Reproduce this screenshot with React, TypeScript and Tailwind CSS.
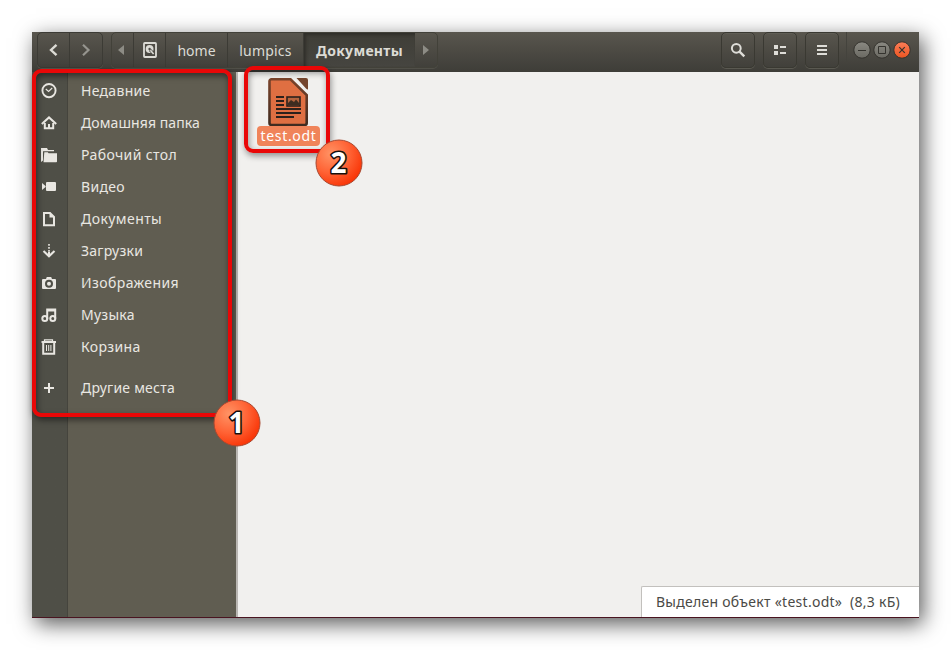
import type { ReactNode } from "react";

const Icon = ({ children }: { children: ReactNode }) => (
  <svg
    width="16"
    height="16"
    viewBox="0 0 16 16"
    fill="none"
    stroke="currentColor"
    className="shrink-0"
  >
    {children}
  </svg>
);

const places = [
  {
    name: "Недавние",
    tracking: "tracking-[0.3px]",
    icon: (
      <>
        <circle cx="8" cy="7.6" r="6.6" strokeWidth="1.9" />
        <path d="M4.8 6 7.6 8.4 11.2 5" strokeWidth="1.2" />
      </>
    ),
  },
  {
    name: "Домашняя папка",
    tracking: "tracking-[0.09px]",
    icon: (
      <>
        <path d="M.8 9 8 2.4 15.2 9" strokeWidth="2" />
        <path d="M3.8 8v5.2h8.4V8" strokeWidth="2" />
        <path d="M7 9h2v5H7z" fill="currentColor" stroke="none" />
      </>
    ),
  },
  {
    name: "Рабочий стол",
    tracking: "tracking-[0.38px]",
    icon: (
      <g fill="currentColor" stroke="none">
        <path d="M0 1h6l1 2h6v1.2H2v9.3L0 15z" />
        <path d="M3.3 5.2h3.5l.8 1H16v8.3a.8.8 0 0 1-.8.8H2.5z" />
      </g>
    ),
  },
  {
    name: "Видео",
    tracking: "tracking-[0.3px]",
    icon: (
      <g fill="currentColor" stroke="none">
        <rect x="5" y="3" width="10" height="9" rx="1" />
        <path d="M1 4l3.6 3v1L1 11z" />
      </g>
    ),
  },
  {
    name: "Документы",
    tracking: "tracking-[0.43px]",
    icon: (
      <>
        <path d="M3 2h6l4 4v8.2H3z" strokeWidth="2" />
        <path d="M8.5 1.5v5H13z" fill="currentColor" stroke="none" />
      </>
    ),
  },
  {
    name: "Загрузки",
    tracking: "tracking-[0.25px]",
    icon: (
      <>
        <path d="M8 1v8" strokeWidth="1.6" strokeDasharray="1.8 1.2" />
        <path d="M2.5 8 8 13.3 13.5 8" strokeWidth="2.1" />
        <path d="M8 9v4" strokeWidth="2" />
      </>
    ),
  },
  {
    name: "Изображения",
    tracking: "tracking-[0.41px]",
    icon: (
      <path
        d="M2 4h3l.8-2h4.4l.8 2h3a1 1 0 0 1 1 1v8a1 1 0 0 1-1 1H2a1 1 0 0 1-1-1V5a1 1 0 0 1 1-1zm6 .8a4 4 0 1 0 0 8 4 4 0 0 0 0-8zm0 2a2 2 0 1 1 0 4 2 2 0 0 1 0-4z"
        fill="currentColor"
        fillRule="evenodd"
        stroke="none"
      />
    ),
  },
  {
    name: "Музыка",
    tracking: "tracking-[0.25px]",
    icon: (
      <>
        <path d="M6.2 12V2.5h8v9M6.2 3.4h8" strokeWidth="2" />
        <circle cx="3.8" cy="11.5" r="2.5" strokeWidth="2" />
        <circle cx="11.8" cy="11.5" r="2.5" strokeWidth="2" />
      </>
    ),
  },
  {
    name: "Корзина",
    tracking: "tracking-[0.35px]",
    icon: (
      <>
        <path d="M.5 3h14.5" strokeWidth="2" />
        <path d="M3.5 2.5V.8h8v1.7" strokeWidth="1.2" />
        <path d="M2.2 4v10.8h11V4" strokeWidth="2" />
        <path d="M5.5 6v6M7.7 6v6M9.9 6v6" strokeWidth="1" />
      </>
    ),
  },
  {
    name: "Другие места",
    tracking: "tracking-[0.22px]",
    icon: <path d="M8 3v10M3 8h10" strokeWidth="2" />,
  },
];

const HeaderButton = ({ children }: { children: ReactNode }) => (
  <div className="flex h-9 w-[34px] items-center justify-center rounded-[5px] border border-[#3a3932] text-[#deddd8] shadow-[0_1px_0_#5a5951,inset_0_1px_0_#5f5d55]">
    {children}
  </div>
);

const Header = () => (
  <div className="flex h-10 shrink-0 bg-linear-to-b from-[#59564e] to-[#3e3d38] pl-[5px] text-[14px] text-[#dcdbd5]">
    <div className="flex h-9 w-[66px] rounded-[5px] border border-[#3c3b35] shadow-[0_1px_0_#55544c]">
      <div className="flex w-[32px] items-center justify-center border-r border-[#3c3b35]">
        <Icon>
          <path d="M10.5 2.8 5 8l5.5 5.2" strokeWidth="2.4" />
        </Icon>
      </div>
      <div className="flex flex-1 items-center justify-center text-[#96958f]">
        <Icon>
          <path d="M5 2.8 10.5 8 5 13.2" strokeWidth="2.2" />
        </Icon>
      </div>
    </div>

    <div className="ml-2 flex h-9 w-[327px] rounded-[5px] border border-[#424139] shadow-[0_1px_0_#504f48]">
      <div className="flex w-[22px] items-center justify-center border-r border-[#3c3b35] pr-1 text-[#8d8c85]">
        <svg width="6" height="10" viewBox="0 0 6 10">
          <path d="M6 0v10L0 5z" fill="currentColor" />
        </svg>
      </div>
      <div className="flex w-8 items-center justify-center border-r border-[#3c3b35]">
        <Icon>
          <rect x="2" y="1" width="12" height="14" rx=".8" strokeWidth="1.8" />
          <circle cx="7.6" cy="7" r="3.9" fill="currentColor" stroke="none" />
          <circle cx="7.6" cy="7" r="1.2" fill="#4c4b45" stroke="none" />
          <path d="M8 8l4 4" stroke="#4c4b45" strokeWidth="3" />
          <path d="M8.4 8.2l3.2 3.8" strokeWidth="1.6" />
        </Icon>
      </div>
      <div className="flex w-[62px] items-center justify-center border-r border-[#3c3b35]">
        home
      </div>
      <div className="flex w-[76px] items-center justify-center border-r border-[#3c3b35] tracking-[0.2px]">
        lumpics
      </div>
      <div className="flex w-[111px] items-center justify-center bg-linear-to-b from-[#3f3e37] to-[#464540] font-bold tracking-[0.3px] shadow-[inset_2px_2px_3px_#302f2a]">
        Документы
      </div>
      <div className="flex flex-1 items-center justify-center text-[#8d8c85]">
        <svg width="6" height="10" viewBox="0 0 6 10">
          <path d="M0 0v10l6-5z" fill="currentColor" />
        </svg>
      </div>
    </div>

    <div className="ml-auto flex gap-2">
      <HeaderButton>
        <Icon>
          <circle cx="6.3" cy="6.3" r="4.4" strokeWidth="2" />
          <path d="M9.3 9.3l5 5" strokeWidth="2.4" />
        </Icon>
      </HeaderButton>
      <HeaderButton>
        <Icon>
          <path
            d="M2 3h4v4H2zM2 9h4v4H2zM8 4h6v2H8zM8 10h6v2H8z"
            fill="currentColor"
            stroke="none"
          />
        </Icon>
      </HeaderButton>
      <HeaderButton>
        <Icon>
          <path d="M3 4h10M3 8h10M3 12h10" strokeWidth="2" />
        </Icon>
      </HeaderButton>
    </div>
    <div className="ml-[7px] flex h-8 border-l border-[#44433d] pt-[9px] pr-2 pl-[6px]">
      <svg width="58" height="18" viewBox="0 0 58 18" fill="none">
        <defs>
          <linearGradient id="grey" x2="0" y2="1">
            <stop stopColor="#8a8982" />
            <stop offset="1" stopColor="#6a6962" />
          </linearGradient>
          <linearGradient id="close" x2="0" y2="1">
            <stop stopColor="#fa7d58" />
            <stop offset="1" stopColor="#ec5521" />
          </linearGradient>
        </defs>
        <g stroke="#34332e">
          <circle cx="9" cy="9" r="8.2" fill="url(#grey)" />
          <circle cx="29" cy="9" r="8.2" fill="url(#grey)" />
          <circle cx="49" cy="9" r="8.2" fill="url(#close)" />
          <path d="M5 9.5h8M25.5 5.5h7v7h-7z" />
          <path d="M46.2 6.2l5.6 5.6M51.8 6.2l-5.6 5.6" strokeWidth="1.2" />
        </g>
      </svg>
    </div>
  </div>
);

const Sidebar = () => (
  <div className="flex w-[206px] shrink-0 border-r-2 border-[#b9b6b2] bg-linear-to-r from-[#4f4f47] from-[35px] to-[#605d51] to-[35px]">
    <div className="w-9 shrink-0 border-r border-[#45443d] pt-[3px] text-[#e9e7e2]">
      {places.map((place) => (
        <div
          key={place.name}
          className="flex h-8 items-center pl-[9px] last:mt-[9px]"
        >
          <Icon>{place.icon}</Icon>
        </div>
      ))}
    </div>
    <div className="pt-[2px] pl-[13px] text-[14px] whitespace-nowrap text-[#e9e7e2]">
      {places.map((place) => (
        <div
          key={place.name}
          className={`flex h-8 items-center last:mt-[9px] ${place.tracking}`}
        >
          {place.name}
        </div>
      ))}
    </div>
  </div>
);

const OdtIcon = () => (
  <svg width="42" height="50" viewBox="0 0 42 50" fill="none">
    <defs>
      <linearGradient id="edge" x2="0" y2="1">
        <stop stopColor="#7a432a" />
        <stop offset="1" stopColor="#402b20" />
      </linearGradient>
    </defs>
    <path d="M28.5 1H38a2 2 0 0 1 2 2v9.5a3 3 0 0 1-2-1z" fill="#75452d" />
    <path
      d="M3.5 2.3h19L38.7 18V46a2 2 0 0 1-2 2H3.5a2 2 0 0 1-2-2V4.3a2 2 0 0 1 2-2z"
      fill="#df6f42"
      stroke="url(#edge)"
      strokeWidth="2.6"
    />
    <path
      d="M8 20h8M8 24h8M8 28h8M8 32h25M8 36h25M8 40h18"
      stroke="#2b211c"
      strokeWidth="2"
    />
    <rect
      x="19"
      y="20"
      width="13"
      height="9"
      fill="#b5643e"
      stroke="#2b211c"
      strokeWidth="1.6"
    />
    <path d="M20 28v-2l3-3 3 2 2-2.5 3.5 4V28z" fill="#3d2c20" />
  </svg>
);

const Badge = ({ value }: { value: number }) => (
  <svg width="48" height="48" viewBox="0 0 48 48">
    <defs>
      <radialGradient id="ball" cx="0.32" cy="0.3" r="0.75">
        <stop stopColor="#ff9365" />
        <stop offset="0.55" stopColor="#ff6335" />
        <stop offset="1" stopColor="#f93507" />
      </radialGradient>
    </defs>
    <circle cx="24" cy="24" r="23" fill="url(#ball)" stroke="#a84830" />
    <text
      x="23.5"
      y="34"
      textAnchor="middle"
      fontSize="28"
      fontWeight="700"
      fill="#fff"
      stroke="#17100d"
      strokeWidth="3.2"
      strokeLinejoin="round"
      paintOrder="stroke"
    >
      {value}
    </text>
  </svg>
);

export default function App() {
  return (
    <div className="relative h-[650px] w-[951px] overflow-hidden bg-white p-8 font-['Noto_Sans',sans-serif]">
      <div className="flex h-[586px] w-[887px] flex-col border-b border-[#4a1420] shadow-[4px_6px_20px_rgba(0,0,0,0.65)]">
        <Header />
        <div className="flex min-h-0 flex-1">
          <Sidebar />
          <div className="flex flex-1 flex-col items-start bg-[#f1f0ee]">
            <div className="mt-[5px] ml-[19px] flex w-[63px] flex-col items-center">
              <OdtIcon />
              <div className="-mt-px flex h-5 w-full items-center justify-center rounded-[4px] bg-[#f0845a] pb-[2px] text-[14px] tracking-[0.65px] text-white">
                test.odt
              </div>
            </div>
            <div className="mt-auto flex h-[31px] w-[278px] items-center self-end rounded-tl-[2px] border-t border-l border-[#c2c0bd] bg-white pb-[2px] pl-[14px] text-[14px] tracking-[0.27px] whitespace-pre text-[#4a4a46]">
              Выделен объект «test.odt»  (8,3 кБ)
            </div>
          </div>
        </div>
      </div>

      <div className="absolute top-[69px] left-8 h-[348px] w-[200px] rounded-[9px] border-4 border-[#e90707] shadow-[1px_3px_6px_rgba(0,0,0,0.5),inset_1px_3px_6px_rgba(0,0,0,0.5)]" />
      <div className="absolute top-[66px] left-[244px] h-[87px] w-[86px] rounded-[9px] border-4 border-[#e90707] shadow-[1px_3px_6px_rgba(0,0,0,0.4),inset_1px_3px_6px_rgba(0,0,0,0.4)]" />
      <div className="absolute top-[399px] left-[213px]">
        <Badge value={1} />
      </div>
      <div className="absolute top-[139px] left-[315px]">
        <Badge value={2} />
      </div>
    </div>
  );
}
